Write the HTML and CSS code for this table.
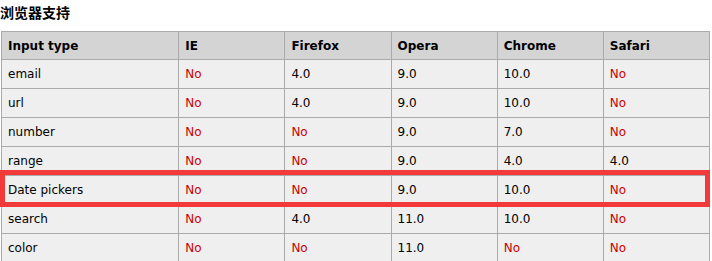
FILE: index.html
```html
<!DOCTYPE html>
<html lang="zh">
<head>
<meta charset="utf-8">
<link rel="stylesheet" href="styles.css">
</head>
<body>
<h4 class="title">浏览器支持</h4>
<div class="wrap">
<table class="support">
<thead>
<tr><th class="c1">Input type</th><th>IE</th><th>Firefox</th><th>Opera</th><th>Chrome</th><th>Safari</th></tr>
</thead>
<tbody>
<tr><td>email</td><td class="no">No</td><td>4.0</td><td>9.0</td><td>10.0</td><td class="no">No</td></tr>
<tr><td>url</td><td class="no">No</td><td>4.0</td><td>9.0</td><td>10.0</td><td class="no">No</td></tr>
<tr><td>number</td><td class="no">No</td><td class="no">No</td><td>9.0</td><td>7.0</td><td class="no">No</td></tr>
<tr><td>range</td><td class="no">No</td><td class="no">No</td><td>9.0</td><td>4.0</td><td>4.0</td></tr>
<tr><td>Date pickers</td><td class="no">No</td><td class="no">No</td><td>9.0</td><td>10.0</td><td class="no">No</td></tr>
<tr><td>search</td><td class="no">No</td><td>4.0</td><td>11.0</td><td>10.0</td><td class="no">No</td></tr>
<tr><td>color</td><td class="no">No</td><td class="no">No</td><td>11.0</td><td class="no">No</td><td class="no">No</td></tr>
</tbody>
</table>
<div class="highlight"></div>
</div>
</body>
</html>
```
FILE: styles.css
```css
html, body {
  margin: 0;
  padding: 0;
  background: #fff;
}
body {
  font-family: "DejaVu Sans", Verdana, sans-serif;
  font-size: 12px;
  color: #000;
}
.title {
  margin: 0;
  padding: 3px 0 0 0;
  height: 31px;
  box-sizing: border-box;
  font-family: "Noto Sans CJK SC", "DejaVu Sans", sans-serif;
  font-size: 14px;
  font-weight: bold;
  line-height: 18px;
}
.wrap {
  position: relative;
}
.support {
  border-collapse: collapse;
  width: 709px;
  margin: 0 0 0 1px;
  table-layout: fixed;
}
.support th,
.support td {
  border: 1px solid #aaaaaa;
  padding: 0 6px;
  text-align: left;
  vertical-align: middle;
}
.support th {
  background: #d4d4d4;
  height: 27px;
  font-weight: bold;
  width: 93px;
}
.support th.c1 {
  width: 164px;
}
.support td {
  background: #efefef;
  height: 28px;
}
.support .no {
  color: #cc0000;
}
.highlight {
  position: absolute;
  left: 0;
  top: 139px;
  width: 710px;
  height: 37px;
  border: 5px solid #f23a3a;
  box-sizing: border-box;
}
```
